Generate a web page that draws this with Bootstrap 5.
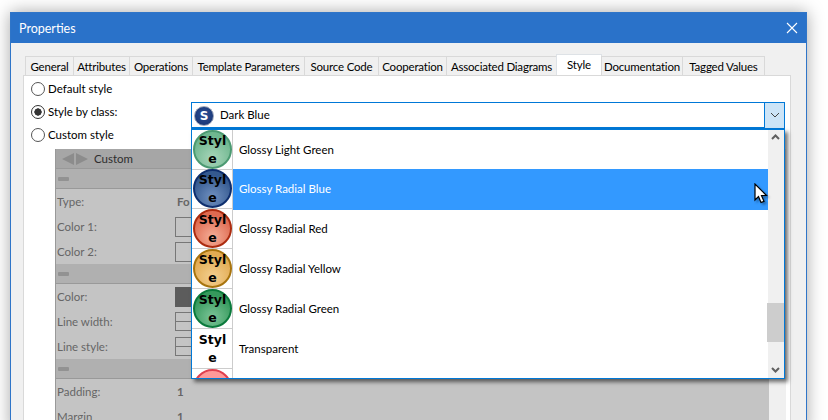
<!DOCTYPE html>
<html lang="en">
<head>
    <meta charset="UTF-8">
    <meta name="viewport" content="width=device-width, initial-scale=1.0">
    <title>Properties</title>
    <link href="https://cdn.jsdelivr.net/npm/bootstrap@5.3.0/dist/css/bootstrap.min.css" rel="stylesheet">
    <style>
        html, body { height: 420px; overflow: hidden; background: #fff; }
        body { font-family: Lato, "Noto Sans", sans-serif; font-size: 11.5px; line-height: 17px; color: #000; }
        .dlg { margin: 12px 21px 0 10px; height: 420px; background: #f0f0f0; border: 1px solid #2f75c8; box-shadow: 0 0 16px rgba(0,0,0,.35); }
        .dlg-title { height: 30px; background: #2a72c9; color: #fff; padding-left: 8px; font-size: 12.5px; }
        .dlg-body { padding: 13px 15px 0 12px; }

        .tab-row { padding-left: 2px; height: 19px; border: 0; flex-wrap: nowrap; position: relative; z-index: 1; }
        .tab-row .nav-link { height: 19px; margin: 0 -1px 0 0; padding: 1px 0 0; text-align: center; white-space: nowrap; font-size: 11.5px; letter-spacing: -.2px; line-height: 17px; color: #000; background: #f0f0f0; border: 1px solid #d9d9d9; border-bottom: 0; border-radius: 0; }
        .tab-row .nav-link.active { height: 21px; margin-top: -2px; background: #fff; padding-top: 1px; color: #000; }
        .tab-row .nav-item:nth-child(1) .nav-link { width: 49px; }
        .tab-row .nav-item:nth-child(2) .nav-link { width: 57px; }
        .tab-row .nav-item:nth-child(3) .nav-link { width: 64px; }
        .tab-row .nav-item:nth-child(4) .nav-link { width: 113px; }
        .tab-row .nav-item:nth-child(5) .nav-link { width: 75px; }
        .tab-row .nav-item:nth-child(6) .nav-link { width: 69px; }
        .tab-row .nav-item:nth-child(7) .nav-link { width: 111px; }
        .tab-row .nav-item:nth-child(8) .nav-link { width: 46px; }
        .tab-row .nav-item:nth-child(9) .nav-link { width: 82px; }
        .tab-row .nav-item:nth-child(10) .nav-link { width: 83px; }

        .tab-panel { height: 360px; background: #fff; border: 1px solid #d9d9d9; border-bottom: 0; padding-right: 4px; }
        .opt-col { width: 167px; height: 73px; padding: 1px 0 0 7px; flex: none; }
        .opt-line { height: 23px; margin: 0; padding: 0; min-height: 0; gap: 3px; }
        .opt-line .form-check-input { float: none; margin: 0; width: 14px; height: 14px; border-color: #555; background-color: #fff; flex: none; }
        .opt-line .form-check-input:checked { background-color: #fff; border-color: #333; background-image: radial-gradient(circle, #333 0 3.4px, transparent 3.9px); }
        .combo-wrap { position: relative; flex: 1; margin: 26px 0 0 0; margin-right: 1px; }
        .combo { height: 27px; background: #fff; border: 1px solid #0078d7; border-bottom-width: 2px; }
        .combo-icon { width: 20px; height: 20px; margin: 1px 6px 0 2px; border-radius: 50%; background: radial-gradient(circle at 50% 40%, #2d4f95, #14306e); border: 1px solid #9aa4b8; color: #fff; font: bold 12px "DejaVu Sans", sans-serif; }
        .combo-name { padding-bottom: 2px; }
        .combo-btn { width: 20px; height: 25px; background: #cce4f7; border-left: 1px solid #0078d7; }

        .drop { position: absolute; left: 0; right: 0; top: 27px; height: 250px; z-index: 5; background: #fff; border: 1px solid #0078d7; border-top-width: 1px; box-shadow: 3px 3px 4px rgba(0,0,0,.55); overflow: hidden; }
        .drop .list-group { width: 576px; flex: none; border-radius: 0; }
        .drop .list-group-item { height: 40px; padding: 0; border: 0; background: transparent; color: #000; font-size: 11.5px; }
        .drop .list-group-item.active { background: transparent; color: #fff; }
        .drop .list-group-item.active .row-txt { background: #3399ff; height: 41px; }
        .ball-cell { width: 41px; height: 40px; flex: none; border-right: 1px solid #ccc; border-bottom: 1px solid #ccc; }
        .row-txt { height: 40px; flex: 1; padding: 0 0 2px 6px; }
        .ball { width: 39px; height: 39px; margin-left: 1px; border-radius: 50%; border: 2px solid; color: #000; font: bold 12.5px/18px "DejaVu Sans", sans-serif; text-align: center; }
        .b-lgreen { background: radial-gradient(circle at 50% 75%, #a8d5ba, #6fb78f 70%); border-color: #4c9a72; }
        .b-blue { background: radial-gradient(circle at 50% 75%, #7090c0, #34598f 70%); border-color: #0f2f6e; }
        .b-red { background: radial-gradient(circle at 50% 75%, #f5ae98, #de6a50 70%); border-color: #ac2c10; }
        .b-yellow { background: radial-gradient(circle at 50% 75%, #f3cf90, #e2ab52 70%); border-color: #a8740e; }
        .b-green { background: radial-gradient(circle at 50% 75%, #7cc598, #35995c 70%); border-color: #0b7a3c; }
        .b-none { border-color: transparent; background: none; }
        .b-pink { background: #f99; border-color: #e0404f; }
        .drop-scroll { width: 17px; flex: none; background: #f0f0f0; }
        .scroll-thumb { position: absolute; right: 0; top: 173px; width: 17px; height: 39px; background: #cdcdcd; }
        .arrow-mark { position: absolute; right: 4px; }
        .arrow-up { top: 4px; }
        .arrow-dn { bottom: 5px; }
        .pointer { position: absolute; left: 562px; top: 53px; width: 14px; height: 21px; z-index: 3; filter: drop-shadow(2px 2px 1px rgba(0,0,0,.3)); }

        .grey-wrap { margin-left: 31px; }
        .grey-pane { width: 714px; flex: none; height: 287px; background: #c4c4c4; border-left: 1px solid #999; color: #666; overflow: hidden; }
        .grey-side { width: 17px; background: #f0f0f0; flex: none; }
        .grey-head { height: 20px; padding-left: 5px; background: #a6a6a6; color: #2e2e2e; border-bottom: 1px solid #999; }
        .grey-head span { margin-left: 5px; }
        .grey-sec { height: 20px; padding-left: 2px; background: #b0b0b0; border-bottom: 1px solid #999; }
        .grey-sec::before { content: ""; width: 11px; height: 4px; background: #929292; border-radius: 1px; }
        .prop-line { height: 25px; padding-left: 1px; }
        .prop-name { width: 118px; flex: none; }
        .prop-val { font-weight: 700; color: #666; padding-left: 2px; }
        .swatch { width: 30px; height: 20px; border: 1px solid #777; }
        .swatch-dark { background: #5c5c5c; border-color: #5c5c5c; }
        .swatch-half { width: 30px; height: 10px; border: 1px solid #777; }
        .swatch-half + .swatch-half { margin-top: -1px; }
    </style>
</head>
<body>
    <div class="dlg">
        <div class="dlg-title d-flex align-items-center justify-content-between">
            <span>Properties</span>
            <svg class="me-2" width="12" height="12" viewBox="0 0 12 12"><path d="M1 1 11 11M11 1 1 11" stroke="#fff" stroke-width="1.1" fill="none"/></svg>
        </div>
        <div class="dlg-body">
            <ul class="nav nav-tabs tab-row">
                <li class="nav-item"><a class="nav-link" href="#">General</a></li>
                <li class="nav-item"><a class="nav-link" href="#">Attributes</a></li>
                <li class="nav-item"><a class="nav-link" href="#">Operations</a></li>
                <li class="nav-item"><a class="nav-link" href="#">Template Parameters</a></li>
                <li class="nav-item"><a class="nav-link" href="#">Source Code</a></li>
                <li class="nav-item"><a class="nav-link" href="#">Cooperation</a></li>
                <li class="nav-item"><a class="nav-link" href="#">Associated Diagrams</a></li>
                <li class="nav-item"><a class="nav-link active" href="#">Style</a></li>
                <li class="nav-item"><a class="nav-link" href="#">Documentation</a></li>
                <li class="nav-item"><a class="nav-link" href="#">Tagged Values</a></li>
            </ul>
            <div class="tab-panel">
                <div class="d-flex">
                    <div class="opt-col">
                        <div class="form-check opt-line d-flex align-items-center"><input class="form-check-input" type="radio" name="st" id="st1"><label for="st1">Default style</label></div>
                        <div class="form-check opt-line d-flex align-items-center"><input class="form-check-input" type="radio" name="st" id="st2" checked><label for="st2">Style by class:</label></div>
                        <div class="form-check opt-line d-flex align-items-center"><input class="form-check-input" type="radio" name="st" id="st3"><label for="st3">Custom style</label></div>
                    </div>
                    <div class="combo-wrap">
                        <div class="combo d-flex align-items-center">
                            <div class="combo-icon d-flex align-items-center justify-content-center">S</div>
                            <span class="combo-name flex-grow-1">Dark Blue</span>
                            <div class="combo-btn d-flex align-items-center justify-content-center">
                                <svg width="10" height="6" viewBox="0 0 10 6"><path d="M1 1 5 5 9 1" stroke="#444" fill="none"/></svg>
                            </div>
                        </div>
                        <div class="drop d-flex">
                            <div class="list-group">
                                <div class="list-group-item d-flex"><div class="ball-cell"><div class="ball b-lgreen">Styl<br>e</div></div><div class="row-txt d-flex align-items-center">Glossy Light Green</div></div>
                                <div class="list-group-item active d-flex"><div class="ball-cell"><div class="ball b-blue">Styl<br>e</div></div><div class="row-txt d-flex align-items-center">Glossy Radial Blue</div></div>
                                <div class="list-group-item d-flex"><div class="ball-cell"><div class="ball b-red">Styl<br>e</div></div><div class="row-txt d-flex align-items-center">Glossy Radial Red</div></div>
                                <div class="list-group-item d-flex"><div class="ball-cell"><div class="ball b-yellow">Styl<br>e</div></div><div class="row-txt d-flex align-items-center">Glossy Radial Yellow</div></div>
                                <div class="list-group-item d-flex"><div class="ball-cell"><div class="ball b-green">Styl<br>e</div></div><div class="row-txt d-flex align-items-center">Glossy Radial Green</div></div>
                                <div class="list-group-item d-flex"><div class="ball-cell"><div class="ball b-none">Styl<br>e</div></div><div class="row-txt d-flex align-items-center">Transparent</div></div>
                                <div class="list-group-item d-flex"><div class="ball-cell"><div class="ball b-pink"></div></div><div class="row-txt d-flex align-items-center"></div></div>
                            </div>
                            <div class="drop-scroll flex-grow-1"></div>
                            <div class="scroll-thumb"></div>
                            <svg class="arrow-mark arrow-up" width="9" height="6" viewBox="0 0 9 6"><path d="M1 5 4.500 1.500 8 5" stroke="#606060" stroke-width="2" fill="none"/></svg>
                            <svg class="arrow-mark arrow-dn" width="9" height="6" viewBox="0 0 9 6"><path d="M1 1 4.500 4.500 8 1" stroke="#606060" stroke-width="2" fill="none"/></svg>
                            <svg class="pointer" viewBox="0 0 14 21"><path d="M1 1V17L4.500 13.500 7 19.500 10 18.300 7.500 12.500H12.500Z" fill="#fff" stroke="#000" stroke-width="1.200"/></svg>
                        </div>
                    </div>
                </div>
                <div class="grey-wrap d-flex">
                    <div class="grey-pane">
                        <div class="grey-head d-flex align-items-center">
                            <svg width="28" height="12" viewBox="0 0 28 12"><path d="M13 0V12L1 6ZM15 0V12L27 6Z" fill="#8c8c8c"/></svg>
                            <span>Custom</span>
                        </div>
                        <div class="grey-sec d-flex align-items-center"></div>
                        <div class="prop-line d-flex align-items-center"><div class="prop-name">Type:</div><div class="prop-val">Fo</div></div>
                        <div class="prop-line d-flex align-items-center"><div class="prop-name">Color 1:</div><div class="swatch"></div></div>
                        <div class="prop-line d-flex align-items-center"><div class="prop-name">Color 2:</div><div class="swatch"></div></div>
                        <div class="grey-sec d-flex align-items-center"></div>
                        <div class="prop-line d-flex align-items-center"><div class="prop-name">Color:</div><div class="swatch swatch-dark"></div></div>
                        <div class="prop-line d-flex align-items-center"><div class="prop-name">Line width:</div><div><div class="swatch-half"></div><div class="swatch-half"></div></div></div>
                        <div class="prop-line d-flex align-items-center"><div class="prop-name">Line style:</div><div><div class="swatch-half"></div><div class="swatch-half"></div></div></div>
                        <div class="grey-sec d-flex align-items-center"></div>
                        <div class="prop-line d-flex align-items-center"><div class="prop-name">Padding:</div><div class="prop-val">1</div></div>
                        <div class="prop-line d-flex align-items-center"><div class="prop-name">Margin</div><div class="prop-val">1</div></div>
                    </div>
                    <div class="grey-side"></div>
                </div>
            </div>
        </div>
    </div>
    <script src="https://cdn.jsdelivr.net/npm/bootstrap@5.3.0/dist/js/bootstrap.bundle.min.js"></script>
</body>
</html>
